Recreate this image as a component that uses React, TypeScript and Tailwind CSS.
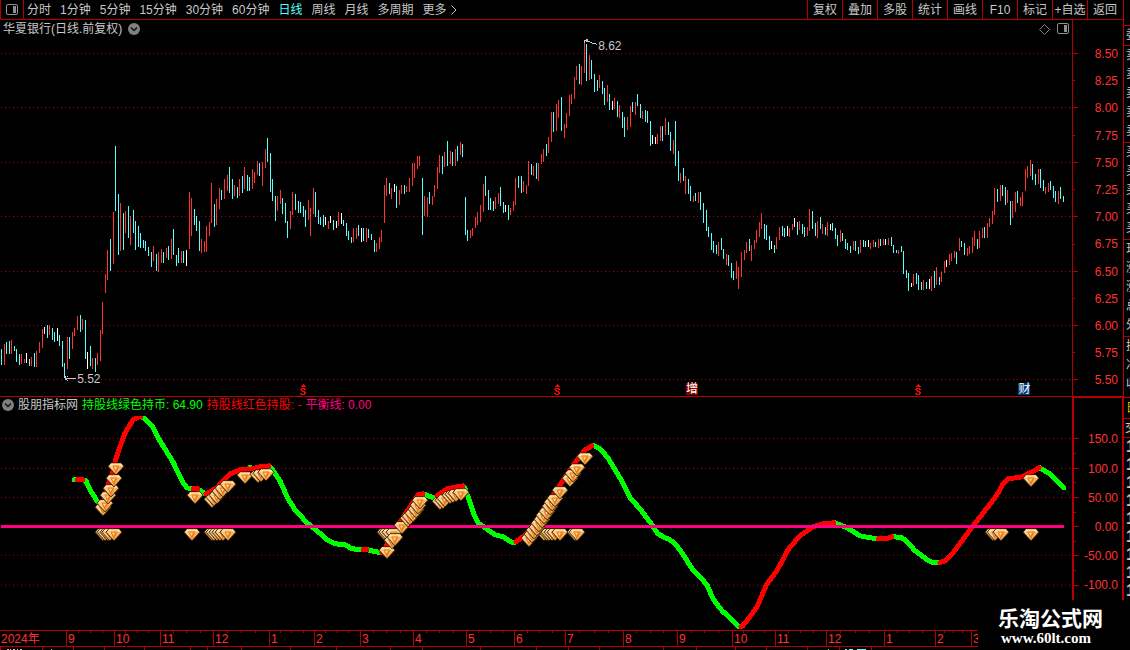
import clsx from "clsx";

const PERIODS = ["分时", "1分钟", "5分钟", "15分钟", "30分钟", "60分钟", "日线", "周线", "月线", "多周期"];
const TOOLS = ["复权", "叠加", "多股", "统计", "画线", "F10", "标记", "+自选", "返回"];

const PRICE_LABELS = ["8.50", "8.25", "8.00", "7.75", "7.50", "7.25", "7.00", "6.75", "6.50", "6.25", "6.00", "5.75", "5.50"];
const PRICE_GRID = [53, 107, 162, 216, 271, 325, 379];
const PRICE_MINOR = [80, 135, 189, 244, 298, 352];

const VALUE_LABELS = ["150.0", "100.0", "50.00", "0.00", "-50.00", "-100.0"];
const VALUE_GRID = [438, 468, 497, 555, 585];
const VALUE_TICKS = [438, 468, 497, 526, 555, 585];
const VALUE_MINOR = [453, 482, 512, 541, 570];

// colour letter + x, high, low  (r = up, c = down, w = flat)
const BARS = `
c1 349 365,r4 344 365,c6 342 354,c9 341 354,r11 340 354,c14 346 351,c16 349 362,c19 354 365,r21 354 364,r24 359 363,
w26 353 363,c29 359 366,r31 357 366,c34 353 367,r36 351 367,r39 342 353,r42 329 348,w44 327 334,c47 325 338,r49 325 335,
c52 328 340,c54 332 342,w57 328 341,c59 335 346,c62 341 367,c64 363 378,r67 337 369,c69 337 359,r72 332 349,r74 328 336,
r77 316 330,c80 315 332,r82 319 330,c85 320 359,w87 352 369,c90 346 366,r92 358 369,c95 358 372,r97 353 365,r100 330 361,
r102 302 334,r105 274 293,r107 250 280,c110 239 271,r113 212 264,c115 146 211,c118 194 255,r120 203 251,c123 213 250,
r125 211 233,c128 206 238,r130 216 245,c133 210 233,c135 221 250,c138 226 247,c140 233 248,c143 240 248,c145 241 251,
c148 247 256,c151 252 267,r153 246 261,c156 254 271,r158 252 272,r161 249 263,c163 252 263,r166 248 258,c168 246 260,
r171 239 259,c173 229 255,c176 255 266,c178 248 263,r181 251 263,c183 251 263,w186 250 266,r189 192 249,r191 198 236,
c194 209 225,c196 216 231,c199 221 251,r201 239 253,r204 241 252,r206 226 252,r209 222 236,r211 183 223,c214 204 227,
r216 199 225,r219 188 209,c221 190 200,r224 179 199,r227 175 191,c229 167 193,c232 179 199,r234 185 196,c237 187 198,
r239 179 196,c242 176 193,r244 167 189,c247 175 191,c249 177 191,r252 169 189,r254 172 183,r257 161 175,c259 163 176,
r262 162 186,r265 149 168,c267 138 162,c270 153 192,c272 179 201,c275 196 221,r277 196 211,r280 190 204,c282 198 214,
c285 203 223,c287 221 238,r290 211 229,r292 192 215,c295 194 210,c298 201 213,c300 202 213,c303 206 217,c305 210 227,
r308 200 220,r310 208 236,r313 188 214,c315 192 217,c318 210 224,c320 217 225,c323 215 227,w325 217 225,r328 221 229,
w330 216 223,c333 220 230,w336 221 228,r338 212 226,w341 213 224,c343 220 226,c346 223 236,c348 231 240,c351 237 243,
r353 228 242,r356 228 239,c358 225 236,w361 228 242,c363 228 241,r366 228 242,c368 229 238,c371 234 240,c374 240 252,
r376 243 252,r379 237 249,r381 230 242,r384 185 223,r386 178 196,c389 183 194,r391 188 199,w394 184 192,c396 186 208,
r399 190 205,r401 185 194,c404 185 194,r406 186 192,r409 178 192,r412 163 186,r414 163 178,r417 156 169,r419 156 166,
c422 178 235,r424 196 216,r427 197 217,c429 192 204,r432 196 205,r434 185 197,r437 167 189,r439 155 173,c442 156 174,
r444 152 167,c447 141 166,r450 151 164,c452 152 166,r455 149 166,c457 146 161,r460 142 155,c462 144 157,c465 197 235,
c467 230 241,r470 230 238,r472 228 236,r475 217 228,r477 212 225,r480 205 222,r483 184 212,c485 176 196,c488 190 210,
c490 198 210,c493 201 211,r495 197 209,r498 193 204,c500 187 206,c503 202 213,w505 205 212,c508 205 220,r510 208 215,
r513 201 211,r515 178 205,c518 176 188,c521 176 193,r523 181 192,r526 185 194,r528 161 186,c531 164 175,r533 166 176,
c536 163 179,r538 163 181,r541 154 164,r543 149 162,c546 144 156,r548 137 153,r551 112 142,c553 112 132,r556 104 131,
r558 100 118,c561 97 131,r564 124 138,r566 113 128,r569 95 116,r571 94 104,r574 77 99,r576 66 80,c579 64 84,r581 66 85,
r584 42 73,c586 44 81,r589 55 80,c591 60 79,c594 74 92,c597 80 91,r599 75 88,c602 81 94,c604 88 105,r607 85 102,
c609 94 110,w612 101 110,r614 98 109,c617 101 117,r619 105 118,c622 112 128,c624 117 137,r627 117 130,r630 106 127,
c632 102 112,r635 102 115,c637 94 106,c640 104 118,r642 111 119,c645 110 122,c647 111 123,c650 121 146,w652 135 144,
w655 137 144,r657 134 144,r660 126 141,c662 126 141,r665 118 135,c668 122 135,c670 132 151,r673 140 154,c675 121 166,
c678 151 181,r680 173 183,c683 168 181,r685 176 194,c688 179 194,c690 186 201,r693 196 202,c695 193 201,r698 192 203,
c700 192 210,c703 203 223,c706 210 231,c708 227 237,c711 233 250,c713 241 253,c716 245 254,r718 242 256,c721 238 250,
c723 249 259,r726 254 265,c728 255 266,c731 263 278,c733 271 280,r736 261 279,r738 267 289,r741 252 277,r744 250 260,
r746 242 253,c749 239 251,r751 245 261,r754 240 249,r756 230 243,r759 222 237,r761 213 229,c764 224 239,c766 225 240,
c769 236 250,w771 241 249,c774 245 253,r776 237 249,r779 227 240,c782 226 236,c784 228 237,w787 226 236,r789 228 237,
r792 224 230,w794 218 227,c797 222 235,r799 221 230,c802 224 234,c804 227 237,r807 227 236,r809 209 231,c812 211 229,
c815 223 236,r817 221 238,c820 217 229,r822 224 234,c825 227 235,r827 222 236,w830 224 230,c832 223 231,c835 228 239,
c837 235 246,r840 230 242,c842 233 241,c845 239 249,c847 243 250,c850 246 253,r853 241 250,c855 241 251,c858 247 254,
r860 240 253,c863 240 247,c865 241 247,w868 240 247,r870 243 249,r873 240 247,c875 242 247,r878 239 248,c880 239 246,
r883 239 245,w885 239 245,r888 238 245,c891 237 246,c893 245 253,c896 250 253,r898 250 254,c901 246 252,c903 251 274,
c906 270 278,c908 273 291,w911 283 287,r913 274 286,c916 273 284,c918 275 290,c921 282 290,r923 280 290,c926 282 289,
w929 279 289,r931 276 291,c934 271 288,r936 267 285,c939 277 285,r941 272 282,r944 261 273,w946 260 267,r949 254 265,
r951 253 261,r954 251 258,c956 252 264,r959 238 251,c961 241 247,c964 243 255,r967 248 256,r969 246 254,r972 237 253,
r974 231 246,c977 239 249,r979 231 248,r982 228 238,c984 227 238,r987 223 238,r989 218 227,r992 211 224,r994 188 215,
c997 189 202,r1000 185 201,c1002 185 196,c1005 187 205,r1007 190 203,c1010 201 225,r1012 201 218,r1015 192 212,
c1017 191 203,r1020 197 206,r1022 192 206,r1025 169 191,r1027 166 178,r1030 160 176,c1032 164 180,c1035 174 185,
r1038 169 184,c1040 169 188,c1043 180 191,r1045 187 194,r1048 183 192,c1050 181 190,c1053 186 198,c1055 191 202,
r1058 191 204,c1060 187 199,c1063 196 202`;

const BAR_COLORS: Record<string, string> = { r: "#ff3232", c: "#54ffff", w: "#ffffff" };

const bars = BARS.trim()
    .split(/,\s*/)
    .map((item) => {
        const [x, high, low] = item.slice(1).split(" ").map(Number);
        return { color: BAR_COLORS[item[0]], x, high, low };
    });

const GREEN_LINES = [
    "74,480 77,480",
    "83,480 86,481 90,490 97,501 102,507",
    "141,417 144,418 152,426 160,441 173,462 183,483 187,488 193,489",
    "198,489 201,491 205,494",
    "249,468 251,468",
    "269,466 272,469 280,481 288,499 295,510 307,523 317,531 327,540 335,544 345,545 352,549 362,550",
    "368,550 371,551 381,553",
    "423,494 426,495 433,498",
    "464,487 465,489 468,497 473,512 478,523 485,528 495,535 503,537 511,542 514,543",
    "594,446 600,449 608,458 620,478 630,498 640,509 652,525 658,534 665,538 670,540 675,544 682,553 692,569 707,585 713,599 722,611 735,623 739,627",
    "835,523 847,528 860,536 870,538 877,539",
    "894,537 902,538 907,542 915,551 927,560 933,563 938,563",
    "1040,468 1043,470 1050,474 1057,481 1064,488",
];

const RED_LINES = [
    "77,480 83,480",
    "103,506 108,485 113,472 115,462 120,447 125,433 133,420 138,417 141,417",
    "193,489 198,489",
    "206,494 217,488 223,481 230,474 240,470 248,469",
    "252,469 260,467 269,466",
    "363,550 367,550",
    "382,553 387,545 402,519 418,495 423,494",
    "437,496 447,489 457,487 463,486",
    "516,542 523,537 530,530 562,482 577,460 585,450 592,446",
    "741,627 743,626 753,613 757,607 767,584 777,571 788,550 800,536 813,527 823,524 834,523",
    "878,539 887,539 892,537",
    "940,563 945,561 953,553 962,541 973,526 988,507 997,495 1003,484 1008,479 1022,477 1032,472 1039,468",
];

// centre x, top y
const GEMS = [
    [103, 529], [105, 529], [108, 529], [110, 529], [114, 529],
    [192, 529],
    [212, 529], [214, 529], [217, 529], [220, 529], [223, 529], [228, 529],
    [385, 529], [387, 529], [390, 529], [394, 529],
    [544, 529], [547, 529], [549, 529], [552, 529], [555, 529], [560, 529], [575, 529], [577, 529],
    [993, 529], [995, 529], [1001, 529], [1031, 529],
    [103, 504], [105, 500], [108, 492], [111, 485], [114, 475], [116, 463],
    [195, 492],
    [212, 496], [214, 494], [217, 492], [220, 488], [223, 485], [228, 481],
    [245, 472], [258, 471], [261, 470], [266, 469],
    [387, 547], [392, 537], [395, 534], [402, 522], [408, 515], [410, 513], [413, 510], [416, 506], [418, 502], [420, 497],
    [440, 498], [443, 497], [445, 495], [450, 492], [453, 491], [456, 490], [461, 489],
    [529, 535], [532, 531], [534, 527], [537, 524], [539, 520], [542, 516], [544, 512], [547, 508], [550, 503], [552, 499], [555, 495], [560, 487],
    [570, 475], [573, 470], [577, 464], [585, 453],
    [1031, 475],
];

// width of every month on the time axis
const MONTHS = [
    { label: "2024年", width: 66 },
    { label: "9", width: 48 },
    { label: "10", width: 46 },
    { label: "11", width: 53 },
    { label: "12", width: 56 },
    { label: "1", width: 45 },
    { label: "2", width: 46 },
    { label: "3", width: 53 },
    { label: "4", width: 53 },
    { label: "5", width: 48 },
    { label: "6", width: 51 },
    { label: "7", width: 58 },
    { label: "8", width: 54 },
    { label: "9", width: 55 },
    { label: "10", width: 43 },
    { label: "11", width: 51 },
    { label: "12", width: 58 },
    { label: "1", width: 51 },
    { label: "2", width: 36 },
    { label: "3", width: 7 },
];
const MONTHS_TOTAL = MONTHS.reduce((sum, m) => sum + m.width, 0);

const LOWER_TICKS = [0, 42, 73, 104, 144, 190, 207, 241, 290, 336, 390, 422, 480, 536, 568, 599, 663, 696, 735, 766, 807, 839, 871];

const QUOTE_GROUPS = [
    ["委"],
    ["卖", "卖", "卖", "卖", "卖"],
    ["买", "买", "买", "买", "买"],
    ["现", "涨", "涨", "总", "外"],
    ["换", "净", "收"],
];

function PanelIcon({ className }: { className?: string }) {
    return (
        <svg width="12" height="12" viewBox="0 0 12 12" fill="none" className={className}>
            <rect x="0.5" y="0.5" width="11" height="10" rx="1.5" stroke="#909090" />
            <rect x="7" y="2" width="3" height="7" fill="#909090" />
        </svg>
    );
}

function ChevronBadge({ label }: { label: string }) {
    return (
        <button type="button" aria-label={label} className="block">
            <svg width="12" height="12" viewBox="0 0 12 12">
                <circle cx="6" cy="6" r="6" fill="#808080" />
                <path d="M3 4.5l3 3 3-3" fill="none" stroke="#101010" strokeWidth="1.5" />
            </svg>
        </button>
    );
}

function DollarMark({ className }: { className: string }) {
    return (
        <svg width="7" height="11" viewBox="0 0 7 11" shapeRendering="crispEdges" className={clsx("absolute bottom-px", className)}>
            <path d="M3 0h1v1h1v1h1v1H1V2h1V1h1z" fill="#f00" />
            <path d="M1 4h4v1h1v1H4V5H2v1h1v1h2v1h1v2H5v1H1v-1H0V9h2v1h2V8H2V7H1V6H0V5h1z" fill="#f00" />
        </svg>
    );
}

function AxisTicks({ top, height, major, minor }: { top: number; height: number; major: number[]; minor: number[] }) {
    return (
        <svg viewBox={`0 ${top} 5 ${height}`} preserveAspectRatio="none" shapeRendering="crispEdges" className="h-full w-[5px] shrink-0">
            {major.map((y) => <rect key={y} x="0" y={y} width="5" height="1" fill="#b40000" />)}
            {minor.map((y) => <rect key={y} x="0" y={y} width="2" height="1" fill="#b40000" />)}
        </svg>
    );
}

function GridLines({ rows }: { rows: number[] }) {
    return (
        <>
            {rows.map((y) => (
                <line key={y} x1="1" x2="1072" y1={y + 0.5} y2={y + 0.5} stroke="#a80000" strokeDasharray="1 3" />
            ))}
        </>
    );
}

function Toolbar() {
    return (
        <header className="flex h-5 shrink-0 border-b border-[#b40000] text-[#c8c8c8]">
            <button type="button" aria-label="侧栏" className="flex w-6 items-center justify-center border-x border-[#b40000]">
                <PanelIcon />
            </button>
            <nav className="flex flex-1 items-center gap-[9px] pl-[3px]">
                {PERIODS.map((p) => (
                    <button key={p} type="button" className={clsx("whitespace-nowrap", p === "日线" && "text-[#54ffff]")}>
                        {p}
                    </button>
                ))}
                <button type="button" className="flex items-center gap-1 whitespace-nowrap">
                    更多
                    <svg width="6" height="10" viewBox="0 0 6 10" fill="none" stroke="currentColor">
                        <path d="M0.5 0.5l4.5 4.5-4.5 4.5" />
                    </svg>
                </button>
            </nav>
            <div className="flex pr-px">
                {TOOLS.map((t) => (
                    <button key={t} type="button" className="w-[35px] whitespace-nowrap border-l border-[#b40000] text-center">
                        {t}
                    </button>
                ))}
            </div>
        </header>
    );
}

function PriceChart() {
    return (
        <section className="flex min-h-0 flex-[377] border-b border-[#b40000]">
            <div className="relative min-w-0 flex-1">
                <svg viewBox="0 20 1072 376" preserveAspectRatio="none" shapeRendering="crispEdges" className="absolute inset-0 h-full w-full">
                    <GridLines rows={PRICE_GRID} />
                    {bars.map((b) => (
                        <rect key={b.x} x={b.x} y={b.high} width="1" height={b.low - b.high} fill={b.color} />
                    ))}
                    <path d="M584.5 43v-3M584 40.5h4M586 39.5h2M586 41.5h3l3 1.5h2l3 1.5" fill="none" stroke="#c8c8c8" />
                    <path d="M65 378.5h11M65.5 376v4M67 376.5h1M66 379.5h1M67 380.5h1" fill="none" stroke="#c8c8c8" />
                </svg>
                <div className="relative flex items-center gap-[6px] pl-[3px] pr-[3px] pt-px">
                    <h1 className="text-[#c8c8c8]">华夏银行(日线.前复权)</h1>
                    <ChevronBadge label="选择品种" />
                    <div className="ml-auto flex items-center gap-[7px]">
                        <svg width="11" height="11" viewBox="0 0 11 11" fill="none" stroke="#808080">
                            <path d="M5.5 0.5l5 5-5 5-5-5z" />
                        </svg>
                        <PanelIcon />
                    </div>
                </div>
                <span className="absolute left-[55.8%] top-5 leading-3 text-[#c8c8c8]">8.62</span>
                <span className="absolute bottom-[11px] left-[7.2%] leading-3 text-[#c8c8c8]">5.52</span>
                <DollarMark className="left-[28%]" />
                <DollarMark className="left-[51.7%]" />
                <DollarMark className="left-[85.4%]" />
                <span className="absolute bottom-px left-[64%] h-3 w-3 bg-[#8c0000] leading-3 text-white">增</span>
                <span className="absolute bottom-px left-[95%] h-3 w-3 bg-[#003c78] leading-3 text-white">财</span>
            </div>
            <div className="flex w-[51px] shrink-0 border-l border-[#b40000] pr-[5px] text-[#ff3232]">
                <AxisTicks top={20} height={376} major={PRICE_GRID} minor={PRICE_MINOR} />
                <ul className="flex flex-1 flex-col justify-between pb-[10px] pt-[28px] text-right leading-3">
                    {PRICE_LABELS.map((l) => <li key={l}>{l}</li>)}
                </ul>
            </div>
        </section>
    );
}

function IndicatorChart() {
    return (
        <section className="flex min-h-0 flex-[233]">
            <div className="relative min-w-0 flex-1">
                <svg viewBox="0 397 1072 233" preserveAspectRatio="none" shapeRendering="crispEdges" className="absolute inset-0 h-full w-full">
                    <defs>
                        <clipPath id="plot">
                            <rect x="0" y="416" width="1072" height="214" />
                        </clipPath>
                        <g id="gem" shapeRendering="auto">
                            <path d="M-5 0h10l3 3.5L0 12-8 3.5z" fill="#f0a850" stroke="#2c1800" strokeWidth="1" />
                            <path d="M-5 0.5h10l2 2.5H-7z" fill="#ffe2ac" />
                            <path d="M-3 2h6l1 1.5h-8z" fill="#f6a54a" />
                            <path d="M-7 3.5h4L0 11z" fill="#f8cf94" />
                            <path d="M-3.5 3.5h7L0 11z" fill="#ea7f1c" />
                            <path d="M-2 4h3L-0.5 7z" fill="#ffd79a" />
                            <path d="M3.5 3.5H7L0 11z" fill="#f4b566" />
                        </g>
                    </defs>
                    <GridLines rows={VALUE_GRID} />
                    <g clipPath="url(#plot)" fill="none" strokeWidth="5" strokeLinejoin="round" strokeLinecap="round">
                        {GREEN_LINES.map((p) => <polyline key={p} points={p} stroke="#00ff00" />)}
                        {RED_LINES.map((p) => <polyline key={p} points={p} stroke="#ff0000" />)}
                    </g>
                    <rect x="1" y="525" width="1063" height="3" fill="#ff0080" />
                    {GEMS.map(([x, y]) => <use key={`${x}-${y}`} href="#gem" x={x} y={y} />)}
                </svg>
                <div className="relative flex items-center gap-1 whitespace-nowrap pl-[2px]">
                    <ChevronBadge label="选择指标" />
                    <h2 className="text-[#c8c8c8]">股朋指标网</h2>
                    <span className="text-[#00ff00]">持股线绿色持币: 64.90</span>
                    <span className="text-[#ff0000]">持股线红色持股: -</span>
                    <span className="text-[#ff0080]">平衡线: 0.00</span>
                </div>
            </div>
            <div className="flex w-[51px] shrink-0 border-l-2 border-r border-t border-[#b40000] pr-1 text-[#ff3232]">
                <AxisTicks top={398} height={232} major={VALUE_TICKS} minor={VALUE_MINOR} />
                <ul className="flex flex-1 flex-col items-end justify-between pb-[39px] pt-[35px] leading-3">
                    {VALUE_LABELS.map((l) => <li key={l}>{l}</li>)}
                </ul>
            </div>
        </section>
    );
}

function TimeAxis() {
    return (
        <footer className="mr-[145px] shrink-0">
            <ol className="flex h-[17px] border-y border-[#b40000] text-[#ff3232]">
                {MONTHS.map((m, i) => (
                    <li
                        key={i}
                        className={clsx("relative shrink-0 whitespace-nowrap pl-px leading-[16px]", i > 0 && "border-l border-[#b40000]")}
                        style={{ width: `${(m.width / MONTHS_TOTAL) * 100}%` }}
                    >
                        {i > 0 && m.width > 10 && (
                            <span className="absolute inset-x-0 top-0 flex justify-evenly">
                                <i className="h-[2px] w-px bg-[#b40000]" />
                                <i className="h-[2px] w-px bg-[#b40000]" />
                                <i className="h-[2px] w-px bg-[#b40000]" />
                            </span>
                        )}
                        {m.label}
                    </li>
                ))}
            </ol>
            <svg viewBox="0 0 978 3" preserveAspectRatio="none" shapeRendering="crispEdges" className="block h-[3px] w-full">
                {LOWER_TICKS.map((x) => <rect key={x} x={x} y="0" width="1" height="3" fill="#b40000" />)}
                <path d="M7 2.5h2M10 2.5h1M13 2.5h2M17 2.5h1M20 2.5h2M51 2.5h1M828 2.5h1" stroke="#c8c8c8" />
                <path d="M845 2.5h2M849 2.5h4M857 2.5h9" stroke="#54ffff" />
            </svg>
        </footer>
    );
}

function QuoteStrip() {
    return (
        <aside className="w-[7px] shrink-0 overflow-hidden border-l border-[#b40000] pt-[25px] text-[#c8c8c8]">
            {QUOTE_GROUPS.map((group, i) => (
                <div key={i} className={clsx("border-t border-[#b40000] pl-[2px]", i === 4 && "h-[61px]")}>
                    {group.map((name, j) => <div key={j} className="h-[19px] w-3 leading-[19px]">{name}</div>)}
                    {i > 0 && i < 4 && <div className="h-px" />}
                </div>
            ))}
            <div className="h-[21px] border-t border-[#b40000] pl-[2px] leading-[20px] text-[#c8c800]">
                <div className="w-3">日</div>
            </div>
            <div className="h-[19px] border-t border-[#b40000] pl-px leading-[19px]">
                <div className="w-3">交</div>
            </div>
            <div className="border-t border-[#b40000] pl-[2px] text-base font-bold leading-[18px]">
                {Array.from({ length: 9 }, (_, i) => <div key={i}>1</div>)}
            </div>
        </aside>
    );
}

export default function App() {
    return (
        <div className="relative flex h-screen overflow-hidden bg-black font-['Liberation_Sans','Noto_Sans_CJK_SC',sans-serif] text-xs">
            <main className="flex min-w-0 flex-1 flex-col">
                <Toolbar />
                <PriceChart />
                <IndicatorChart />
                <TimeAxis />
            </main>
            <QuoteStrip />
            <div className="absolute bottom-0 right-0 h-[50px] w-[152px] bg-black pl-5 pt-2 text-white">
                <div className="text-[21px] font-bold leading-[22px]">乐淘公式网</div>
                <a href="#" className="block pl-[3px] font-['Liberation_Serif',serif] text-[15px] font-bold leading-4">www.60lt.com</a>
            </div>
        </div>
    );
}
